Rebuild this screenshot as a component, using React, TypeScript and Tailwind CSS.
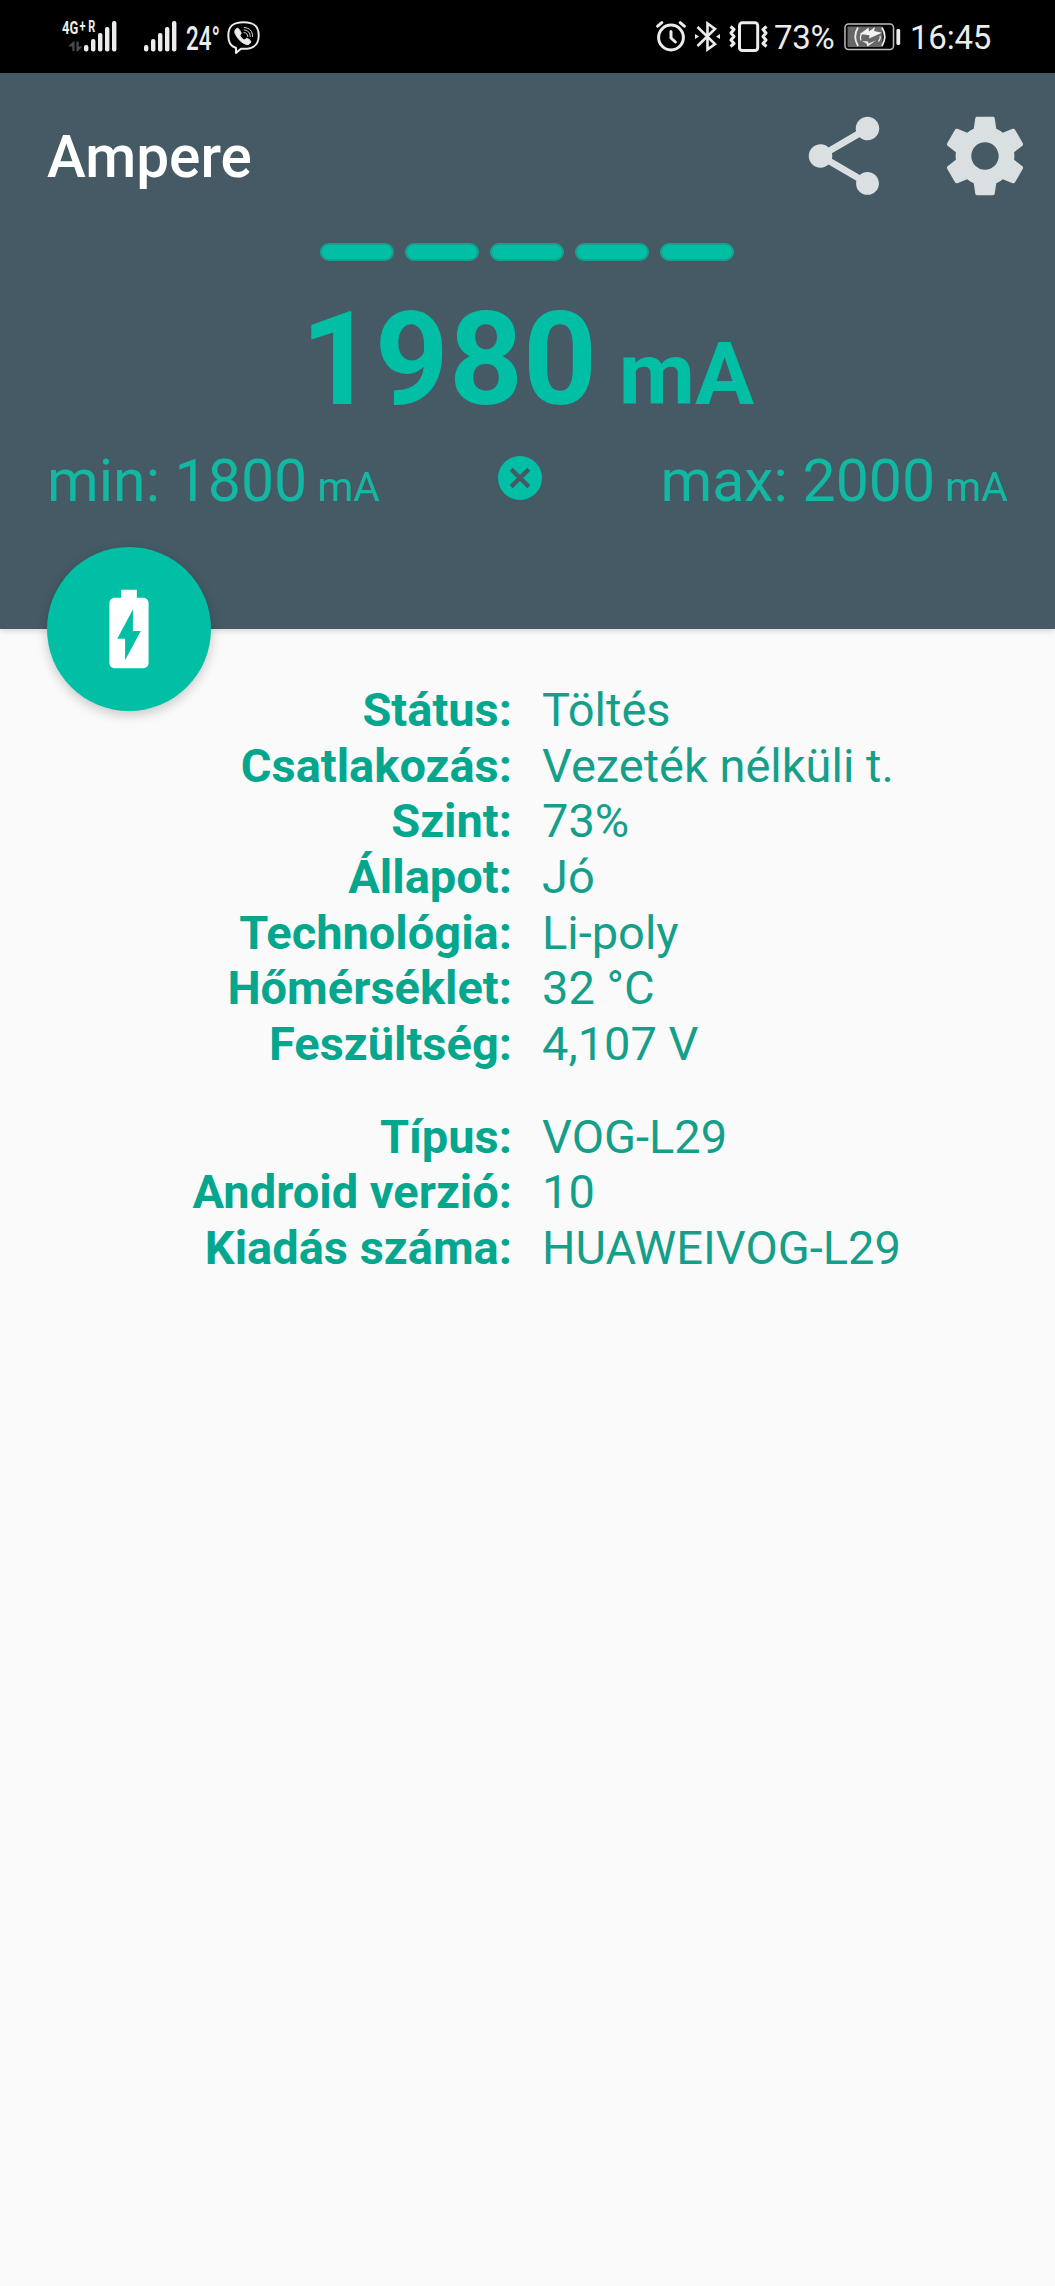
import { MdBatteryChargingFull, MdShare } from "react-icons/md";

interface InfoRow {
    label: string;
    value: string;
}

const BATTERY_ROWS: InfoRow[] = [
    { label: "Státus:", value: "Töltés" },
    { label: "Csatlakozás:", value: "Vezeték nélküli t." },
    { label: "Szint:", value: "73%" },
    { label: "Állapot:", value: "Jó" },
    { label: "Technológia:", value: "Li-poly" },
    { label: "Hőmérséklet:", value: "32 °C" },
    { label: "Feszültség:", value: "4,107 V" },
];

const DEVICE_ROWS: InfoRow[] = [
    { label: "Típus:", value: "VOG-L29" },
    { label: "Android verzió:", value: "10" },
    { label: "Kiadás száma:", value: "HUAWEIVOG-L29" },
];

function SignalBars() {
    return (
        <svg width="33" height="32" viewBox="0 0 33 32" fill="#ececec">
            <rect x="0" y="24" width="4.4" height="6.5" rx="2" />
            <rect x="7" y="18" width="4.4" height="12.5" rx="2" />
            <rect x="14" y="12" width="4.4" height="18.5" rx="2" />
            <rect x="21" y="6" width="4.4" height="24.5" rx="2" />
            <rect x="28" y="0" width="4.4" height="30.5" rx="2" />
        </svg>
    );
}

function ViberIcon() {
    return (
        <svg width="33" height="34" viewBox="0 0 33 34" fill="none" stroke="#ececec" strokeLinecap="round" strokeLinejoin="round">
            <path strokeWidth="2" d="M8 26.5C2.5 24.5 1.3 20 1.3 14.5C1.3 5 6 1.2 16.5 1.2S31.7 5 31.7 14.5S27 27.8 16.5 27.8L14 27.8L9 32V26.8" />
            <path fill="#ececec" strokeWidth="1" d="M10 7.5C7.5 8.5 7.3 11 8.6 13.5C11.3 18.5 14.5 21.8 19.5 23.6C21.5 24.2 23.2 22.5 23.8 20.8C24 19.5 20.5 17 19.2 17.6C18 18.8 17.3 19.5 15.5 17.8C13.5 16 12.6 14.7 13.3 13.6C15 12.4 13.8 11 12.5 9C11.7 7.8 11 7.2 10 7.5Z" />
            <path strokeWidth="0.9" d="M17 11.5C19.5 11.8 20.5 13 20.8 15.5M17.2 9C21.5 9.4 23 11.5 23.2 15.5M17.2 6.5C23 7 25.5 10 25.6 15.5" />
        </svg>
    );
}

function AlarmIcon() {
    return (
        <svg width="30" height="31" viewBox="0 0 30 31" fill="none" stroke="#ececec" strokeLinecap="round" strokeLinejoin="round">
            <circle cx="15" cy="16.5" r="12.4" strokeWidth="3" />
            <path strokeWidth="3" d="M15 10.5V17L19.3 21M1.7 5.2L5.8 1.7M28.3 5.2L24.2 1.7" />
        </svg>
    );
}

function BluetoothIcon() {
    return (
        <svg width="25" height="32" viewBox="0 0 25 32" fill="none" stroke="#ececec" strokeWidth="2.6">
            <path d="M2.5 6L20 23L12.5 28.5V2.5L20 8L2.5 25" />
            <path fill="#ececec" stroke="none" d="M0 13L4 15.5L0 18ZM25 13L21 15.5L25 18Z" />
        </svg>
    );
}

function VibrateIcon() {
    return (
        <svg width="39" height="32" viewBox="0 0 39 32" fill="none" stroke="#ececec" strokeWidth="3" strokeLinejoin="round">
            <rect x="10.5" y="1.7" width="18.2" height="27.8" rx="2.8" />
            <path d="M1.5 5.5L5 8.5L2 12L5 15.5L2 19L5 22.5L1.5 25.5M37.5 5.5L34 8.5L37 12L34 15.5L37 19L34 22.5L37.5 25.5" />
        </svg>
    );
}

function StatusBatteryIcon() {
    return (
        <svg width="57" height="28" viewBox="0 0 57 28" fill="none">
            <rect x="1" y="1" width="48.5" height="25.5" rx="3.5" stroke="#bdbdbd" strokeWidth="1.5" />
            <rect x="3.5" y="3.5" width="35" height="20.5" rx="1" fill="#666" />
            <path stroke="#ececec" strokeWidth="1.8" d="M14 4.5Q8.5 13.5 14 23M38 4.5Q43.5 13.5 38 23" />
            <path stroke="#ececec" strokeWidth="1.3" d="M18 10Q15.5 13.5 17 17.5M34.5 18.5Q37 15 36 13" />
            <path fill="#f2f2f2" d="M24.5 4.5L16 11L25.5 12.2L25 15.5L38 9.8L30 8L31 4L25 8.5Z" />
            <path fill="#f2f2f2" d="M18 18L24 18.5L24.5 20.5L32 17.5L23.5 23.5L22.5 20.5Z" />
            <rect x="52.4" y="6" width="3.8" height="16" rx="1.4" fill="#ececec" />
        </svg>
    );
}

function SettingsIcon() {
    return (
        <svg className="mr-[23px] ml-[47px] size-[94px] fill-[#dae0e2]" viewBox="0 0 24 24">
            <path d="M19.43 12.98c.04-.32.07-.64.07-.98s-.03-.66-.07-.98l2.11-1.65c.19-.15.24-.42.12-.64l-2-3.46c-.12-.22-.39-.3-.61-.22l-2.49 1c-.52-.4-1.08-.73-1.69-.98l-.38-2.65C14.46 2.18 14.25 2 14 2h-4c-.25 0-.46.18-.49.42l-.38 2.65c-.61.25-1.17.59-1.69.98l-2.49-1c-.23-.09-.49 0-.61.22l-2 3.46c-.13.22-.07.49.12.64l2.11 1.65c-.04.32-.07.65-.07.98s.03.66.07.98l-2.11 1.65c-.19.15-.24.42-.12.64l2 3.46c.12.22.39.3.61.22l2.49-1c.52.4 1.08.73 1.69.98l.38 2.65c.03.24.24.42.49.42h4c.25 0 .46-.18.49-.42l.38-2.65c.61-.25 1.17-.59 1.69-.98l2.49 1c.23.09.49 0 .61-.22l2-3.46c.12-.22.07-.49-.12-.64l-2.11-1.65zM12 15.5c-1.93 0-3.5-1.57-3.5-3.5s1.57-3.5 3.5-3.5 3.5 1.57 3.5 3.5-1.57 3.5-3.5 3.5z" />
        </svg>
    );
}

function StatusBar() {
    return (
        <div className="flex h-[73px] items-start bg-black pt-[21px] text-[#ececec]">
            <div className="ml-[62px] flex w-[22px] shrink-0 flex-col">
                <span className="flex h-[14px] origin-left scale-x-[0.68] text-[19px] leading-[14px] font-bold">
                    4G<span className="ml-0.5 flex gap-1 text-[16px] leading-[12px]"><span>+</span><span>R</span></span>
                </span>
                <svg className="mt-1.5 ml-1.5" width="15" height="11" viewBox="0 0 16 12" fill="#4a4a4a">
                    <path d="M0 6L5.5 0.5H7V11H4.5V6ZM9 0.5H11.5V6H15.5L10.5 11.5H9Z" />
                </svg>
            </div>
            <SignalBars />
            <div className="ml-[27px]">
                <SignalBars />
            </div>
            <span className="ml-[9px] w-[34px] origin-left scale-x-[0.66] text-[34px] leading-[34px] font-medium whitespace-nowrap">24°</span>
            <div className="ml-[7px]">
                <ViberIcon />
            </div>
            <div className="ml-auto flex items-start pr-16">
                <AlarmIcon />
                <div className="ml-[9px]">
                    <BluetoothIcon />
                </div>
                <div className="ml-[9px]">
                    <VibrateIcon />
                </div>
                <span className="ml-1.5 w-[61px] text-[33px] leading-[34px] tracking-[-0.3px]">73%</span>
                <div className="mt-0.5 ml-[9px]">
                    <StatusBatteryIcon />
                </div>
                <span className="ml-[9px] w-[81px] text-[33px] leading-[34px] tracking-[-0.2px]">16:45</span>
            </div>
        </div>
    );
}

function InfoTable({ rows }: { rows: InfoRow[] }) {
    return (
        <dl className="grid grid-cols-[512px_1fr] gap-x-[30px] text-[47px] leading-[55.65px] whitespace-nowrap">
            {rows.map((row) => (
                <div key={row.label} className="contents">
                    <dt className="text-right font-bold text-[#05a68e]">{row.label}</dt>
                    <dd className="text-[#159f8a]">{row.value}</dd>
                </div>
            ))}
        </dl>
    );
}

export default function App() {
    return (
        <div className="h-[2286px] w-[1055px] overflow-hidden bg-[#fafafa] font-['Roboto',sans-serif]">
            <StatusBar />

            <header className="relative h-[556px] bg-[#455a64] shadow-[0_2px_6px_rgba(0,0,0,0.15)]">
                <div className="flex h-[165px] items-center pl-[47px]">
                    <h1 className="mt-1 text-[58.5px] leading-none font-medium text-white">Ampere</h1>
                    <MdShare className="ml-auto size-[94px] text-[#dae0e2]" />
                    <SettingsIcon />
                </div>

                {/* Charge current gauge */}
                <div className="mt-[5px] flex justify-center gap-[11px] pr-0.5">
                    {[0, 1, 2, 3, 4].map((n) => (
                        <div key={n} className="h-[18px] w-[74px] rounded-full border-2 border-[#17a08c] bg-[#00bfa5]" />
                    ))}
                </div>

                <div className="mt-6 text-center text-[129px] leading-[150px] font-bold whitespace-nowrap text-[#00bfa5]">
                    1980<span className="text-[88px] leading-none"> mA</span>
                </div>

                <div className="mt-[11px] flex items-start justify-between px-[47px] text-[59px] leading-[70px] text-[#12b8a1]">
                    <span>
                        min: 1800<span className="text-[41px] leading-none"> mA</span>
                    </span>
                    <svg className="mt-[9px]" width="46" height="46" viewBox="0 0 46 46">
                        <circle cx="23" cy="23" r="22" fill="#00bfa5" />
                        <path d="M14.2 14.2L31.8 31.8M31.8 14.2L14.2 31.8" stroke="#455a64" strokeWidth="4.4" />
                    </svg>
                    <span>
                        max: 2000<span className="text-[41px] leading-none"> mA</span>
                    </span>
                </div>

                {/* Floating button over the header edge */}
                <button className="absolute -bottom-[82px] left-[47px] flex size-[164px] items-center justify-center rounded-full bg-[#00bfa5] shadow-[0_4px_12px_rgba(0,0,0,0.2)]">
                    <MdBatteryChargingFull className="size-[94px] text-white" />
                </button>
            </header>

            <main className="flex flex-col gap-[37px] pt-[53px]">
                <InfoTable rows={BATTERY_ROWS} />
                <InfoTable rows={DEVICE_ROWS} />
            </main>
        </div>
    );
}
